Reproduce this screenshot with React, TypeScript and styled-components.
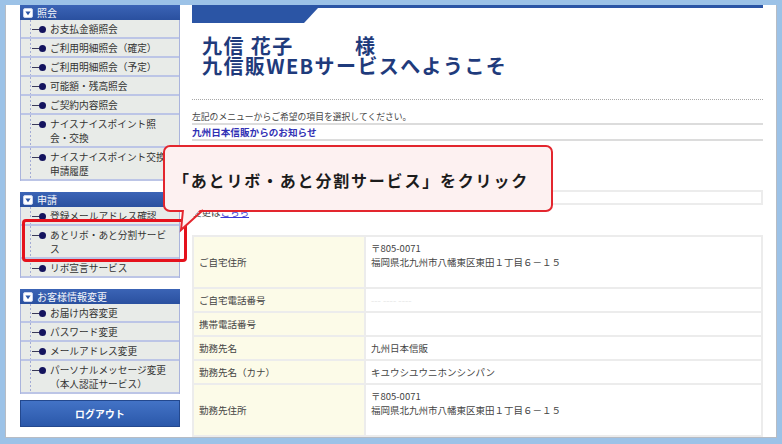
import React from "react";
import styled, { createGlobalStyle, css } from "styled-components";

const GlobalStyle = createGlobalStyle`
  html, body { margin: 0; padding: 0; }
  body {
    background: #9cc2e7;
    font-family: "Noto Sans CJK JP", "Noto Sans", sans-serif;
    color: #444;
  }
  * { box-sizing: border-box; }
`;

const Frame = styled.div`
  width: 782px;
  height: 444px;
  padding: 5px 5px 0 5px;
  overflow: hidden;
`;

const Panel = styled.div`
  position: relative;
  height: 433px;
  background: #fff;
  border: 1px solid #b7bcc4;
  border-top: none;
  display: flex;
  gap: 12px;
  padding: 0 13px 0 14px;
  overflow: hidden;
`;

/* ---------- Sidebar ---------- */
const Sidebar = styled.nav`
  flex: 0 0 160px;
  display: flex;
  flex-direction: column;
`;

const Section = styled.section`
  & + & { margin-top: 11px; }
`;

const SectionHeader = styled.div`
  height: 15px;
  display: flex;
  align-items: center;
  gap: 4px;
  padding-left: 3px;
  background: linear-gradient(#3b64b6, #2a509f);
  color: #f4f6fb;
  font-size: 10px;
  line-height: 15px;
`;

const ItemList = styled.ul`
  list-style: none;
  margin: 0;
  padding: 0;
  border-left: 1px solid #aab4dc;
  border-right: 1px solid #aab4dc;
`;

const Item = styled.li<{ $hl?: boolean }>`
  position: relative;
  display: flex;
  align-items: flex-start;
  padding: 2px 0 1px;
  line-height: 14px;
  font-size: 9.7px;
  color: #333;
  white-space: nowrap;
  border-bottom: 2px solid #bcc5e6;
  background:
    repeating-linear-gradient(to bottom, #a3abd4 0 2px, transparent 2px 4px) 9px 0 / 1px 100% no-repeat,
    #e8ebe8;
  ${(p) =>
    p.$hl &&
    css`
      &::after {
        content: "";
        position: absolute;
        left: 1px;
        right: -8px;
        top: -7px;
        bottom: -5px;
        border: 3px solid #e5121c;
        border-radius: 4px;
        pointer-events: none;
        z-index: 2;
      }
    `}
`;

const Marker = styled.span`
  flex: 0 0 29px;
  height: 14px;
  display: flex;
  align-items: center;
  padding-left: 11px;
`;

const Dash = styled.span`
  width: 7px;
  height: 1px;
  background: #3a3a5a;
`;

const Dot = styled.span`
  width: 7px;
  height: 7px;
  border-radius: 50%;
  background: #14145e;
`;

const ItemText = styled.span`
  display: block;
`;

const LogoutButton = styled.button`
  margin-top: 6px;
  height: 27px;
  width: 100%;
  border: 1px solid #23488e;
  background: linear-gradient(#4373c6, #2b58aa);
  color: #fff;
  font-family: inherit;
  font-weight: 700;
  font-size: 9.8px;
  letter-spacing: 0.2px;
  padding: 0;
`;

/* ---------- Main ---------- */
const Main = styled.main`
  flex: 0 0 571px;
  display: flex;
  flex-direction: column;
  min-width: 0;
`;

const TopBar = styled.div`
  flex: none;
  height: 18px;
  border-top: 3px solid #2b55a5;
`;

const TopTab = styled.div`
  width: 126px;
  height: 15px;
  background: #2b55a5;
  clip-path: polygon(0 0, 100% 0, calc(100% - 14px) 100%, 0 100%);
`;

const Greeting = styled.h1`
  margin: 13px 0 0;
  padding-left: 10px;
  font-size: 20px;
  line-height: 20px;
  font-weight: 700;
  letter-spacing: 1.4px;
  color: #1f3b7c;
`;

const Name = styled.span`
  display: inline-block;
  width: 153px;
`;

const DottedRule = styled.hr`
  margin: 23px 0 0;
  height: 0;
  border: none;
  border-top: 1px dotted #a8a8a8;
`;

const Lead = styled.p`
  margin: 10px 0 0;
  font-size: 8.8px;
  line-height: 13px;
  color: #444;
  border-bottom: 2px solid #dcdcdc;
`;

const NoticeTitle = styled.h2`
  margin: 0;
  font-size: 9.6px;
  line-height: 14px;
  font-weight: 700;
  color: #3030b4;
  border-bottom: 2px solid #dcdcdc;
`;

const NoticeBox = styled.div`
  margin-top: 49px;
  height: 18px;
  border: 2px solid #ececec;
`;

const ChangeNote = styled.p`
  margin: 1px 0 0;
  font-size: 9.5px;
  line-height: 13px;
  color: #444;
`;

const Link = styled.a`
  color: #3b3bd6;
  text-decoration: underline;
`;

const InfoTable = styled.table`
  margin-top: 16px;
  width: 100%;
  table-layout: fixed;
  border-collapse: collapse;
  font-size: 9.5px;
  line-height: 14px;
  color: #444;
`;

const LabelCell = styled.th`
  width: 172px;
  padding: 4px 5px;
  text-align: left;
  font-weight: 400;
  vertical-align: middle;
  background: #fcfbe8;
  border: 2px solid #ececec;
`;

const ValueCell = styled.td<{ $faint?: boolean }>`
  padding: 4px 5px;
  vertical-align: middle;
  border: 2px solid #ececec;
  color: ${(p) => (p.$faint ? "#e6e6e6" : "#444")};
`;

/* ---------- Callout ---------- */
const Callout = styled.div`
  position: absolute;
  left: 157px;
  top: 140px;
  width: 390px;
  height: 67px;
  border: 2px solid #e3262e;
  border-radius: 7px;
  background: #fdf1f1;
  display: flex;
  align-items: center;
  padding: 3px 0 0 8px;
  z-index: 5;
`;

const CalloutText = styled.span`
  font-size: 16px;
  font-weight: 700;
  letter-spacing: 1.8px;
  color: #1c1c1c;
  white-space: nowrap;
`;

const Tail = styled.svg`
  position: absolute;
  left: 0;
  top: 0;
  overflow: visible;
  pointer-events: none;
`;

type MenuItem = { lines: string[]; hl?: boolean };
type MenuSection = { title: string; items: MenuItem[] };

const menu: MenuSection[] = [
  {
    title: "照会",
    items: [
      { lines: ["お支払金額照会"] },
      { lines: ["ご利用明細照会（確定）"] },
      { lines: ["ご利用明細照会（予定）"] },
      { lines: ["可能額・残高照会"] },
      { lines: ["ご契約内容照会"] },
      { lines: ["ナイスナイスポイント照", "会・交換"] },
      { lines: ["ナイスナイスポイント交換", "申請履歴"] },
    ],
  },
  {
    title: "申請",
    items: [
      { lines: ["登録メールアドレス確認"] },
      { lines: ["あとリボ・あと分割サービ", "ス"], hl: true },
      { lines: ["リボ宣言サービス"] },
    ],
  },
  {
    title: "お客様情報変更",
    items: [
      { lines: ["お届け内容変更"] },
      { lines: ["パスワード変更"] },
      { lines: ["メールアドレス変更"] },
      { lines: ["パーソナルメッセージ変更", "（本人認証サービス）"] },
    ],
  },
];

type Row = { label: string; value: string[]; faint?: boolean };
const rows: Row[] = [
  { label: "ご自宅住所", value: ["〒805-0071", "福岡県北九州市八幡東区東田１丁目６－１５", "\u00a0"] },
  { label: "ご自宅電話番号", value: ["--- ---- ----"], faint: true },
  { label: "携帯電話番号", value: ["\u00a0"] },
  { label: "勤務先名", value: ["九州日本信販"] },
  { label: "勤務先名（カナ）", value: ["キユウシユウニホンシンパン"] },
  { label: "勤務先住所", value: ["〒805-0071", "福岡県北九州市八幡東区東田１丁目６－１５", "\u00a0"] },
];

const ToggleIcon = () => (
  <svg width="10" height="10" viewBox="0 0 10 10">
    <rect x="0.5" y="0.5" width="9" height="9" rx="1.5" fill="#fff" stroke="#c9d3ee" />
    <path d="M2.4 3.4h5.2L5 7.2z" fill="#2b55a5" />
  </svg>
);

export default function App() {
  return (
    <>
      <GlobalStyle />
      <Frame>
        <Panel>
          <Sidebar>
            {menu.map((sec) => (
              <Section key={sec.title}>
                <SectionHeader>
                  <ToggleIcon />
                  <span>{sec.title}</span>
                </SectionHeader>
                <ItemList>
                  {sec.items.map((it) => (
                    <Item key={it.lines.join("")} $hl={it.hl}>
                      <Marker>
                        <Dash />
                        <Dot />
                      </Marker>
                      <span>
                        {it.lines.map((l) => (
                          <ItemText key={l}>{l}</ItemText>
                        ))}
                      </span>
                    </Item>
                  ))}
                </ItemList>
              </Section>
            ))}
            <LogoutButton type="button">ログアウト</LogoutButton>
          </Sidebar>

          <Main>
            <TopBar>
              <TopTab />
            </TopBar>
            <Greeting>
              <Name>九信 花子</Name>様
              <br />
              九信販WEBサービスへようこそ
            </Greeting>
            <DottedRule />
            <Lead>左記のメニューからご希望の項目を選択してください。</Lead>
            <NoticeTitle>九州日本信販からのお知らせ</NoticeTitle>
            <NoticeBox />
            <ChangeNote>
              変更は<Link href="#">こちら</Link>
            </ChangeNote>
            <InfoTable>
              <tbody>
                {rows.map((r) => (
                  <tr key={r.label}>
                    <LabelCell>{r.label}</LabelCell>
                    <ValueCell $faint={r.faint}>
                      {r.value.map((v, i) => (
                        <div key={i}>{v}</div>
                      ))}
                    </ValueCell>
                  </tr>
                ))}
              </tbody>
            </InfoTable>
          </Main>

          <Callout>
            <CalloutText>「あとリボ・あと分割サービス」をクリック</CalloutText>
            <Tail width="60" height="90">
              <polygon points="18.5,59 38.5,59 16,83" fill="#fdf1f1" />
              <polyline
                points="18,63 16,83 38,63"
                fill="none"
                stroke="#e3262e"
                strokeWidth="2"
              />
            </Tail>
          </Callout>
        </Panel>
      </Frame>
    </>
  );
}
